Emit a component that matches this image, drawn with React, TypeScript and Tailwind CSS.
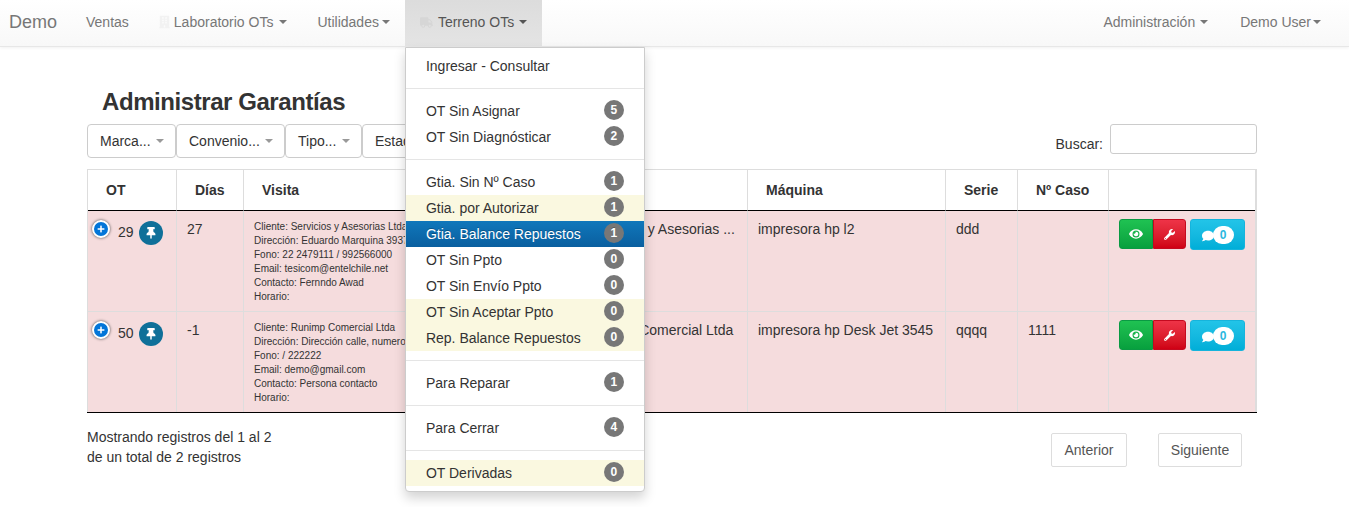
import { FaBuilding, FaComment, FaEye, FaPlus, FaThumbtack, FaTruck, FaWrench } from 'react-icons/fa';

const menuGroups = [
  [{ label: 'Ingresar - Consultar' }],
  [
    { label: 'OT Sin Asignar', count: 5 },
    { label: 'OT Sin Diagnósticar', count: 2 },
  ],
  [
    { label: 'Gtia. Sin Nº Caso', count: 1 },
    { label: 'Gtia. por Autorizar', count: 1, warn: true },
    { label: 'Gtia. Balance Repuestos', count: 1, active: true },
    { label: 'OT Sin Ppto', count: 0 },
    { label: 'OT Sin Envío Ppto', count: 0 },
    { label: 'OT Sin Aceptar Ppto', count: 0, warn: true },
    { label: 'Rep. Balance Repuestos', count: 0, warn: true },
  ],
  [{ label: 'Para Reparar', count: 1 }],
  [{ label: 'Para Cerrar', count: 4 }],
  [{ label: 'OT Derivadas', count: 0, warn: true }],
];

const rows = [
  {
    ot: 29,
    dias: '27',
    visita: [
      'Cliente: Servicios y Asesorias Ltda',
      'Dirección: Eduardo Marquina 3937',
      'Fono: 22 2479111 / 992566000',
      'Email: tesicom@entelchile.net',
      'Contacto: Fernndo Awad',
      'Horario:',
    ],
    cliente: 'Servicios y Asesorias ...',
    maquina: 'impresora hp l2',
    serie: 'ddd',
    caso: '',
  },
  {
    ot: 50,
    dias: '-1',
    visita: [
      'Cliente: Runimp Comercial Ltda',
      'Dirección: Dirección calle, numero',
      'Fono: / 222222',
      'Email: demo@gmail.com',
      'Contacto: Persona contacto',
      'Horario:',
    ],
    cliente: 'Runimp Comercial Ltda',
    maquina: 'impresora hp Desk Jet 3545',
    serie: 'qqqq',
    caso: '1111',
  },
];

function Caret({ className = 'ml-[5px]' }: { className?: string }) {
  return <span className={`inline-block h-0 w-0 border-x-4 border-t-4 border-x-transparent border-t-current align-middle ${className}`} />;
}

function FilterButton({ label, className }: { label: string; className: string }) {
  return (
    <button className={`flex h-[34px] items-center justify-between rounded border border-[#ccc] bg-white pl-3 pr-[11px] text-sm text-[#333] ${className}`}>
      {label}
      <Caret className="text-[#999]" />
    </button>
  );
}

function DropdownMenu() {
  return (
    <div className="absolute left-0 top-[47px] z-10 w-[240px] rounded-b border border-[#ccc] bg-white py-[5px] text-sm text-[#333] shadow-[0_6px_12px_rgba(0,0,0,0.175)]">
      {menuGroups.map((group, i) => (
        <div key={group[0].label}>
          {i > 0 ? <div className="my-[9px] h-px bg-[#e5e5e5]" /> : null}
          {group.map((item: { label: string; count?: number; warn?: boolean; active?: boolean }) => (
            <div
              key={item.label}
              className={`flex h-[26px] items-center justify-between pl-5 pr-5 ${
                item.active
                  ? 'bg-gradient-to-b from-[#1077bb] to-[#0a5f9f] text-white [text-shadow:0_-1px_0_rgba(0,0,0,0.25)]'
                  : item.warn
                    ? 'bg-[#faf8e0]'
                    : ''
              }`}
            >
              <span>{item.label}</span>
              {item.count !== undefined ? (
                <span className="-mt-[3px] flex h-5 w-5 items-center justify-center rounded-full bg-[#777] text-xs font-bold text-white">
                  {item.count}
                </span>
              ) : null}
            </div>
          ))}
        </div>
      ))}
    </div>
  );
}

function Navbar() {
  return (
    <nav className="flex h-[47px] items-stretch justify-between border-b border-[#e7e7e7] bg-gradient-to-b from-white to-[#f8f8f8] text-sm text-[#777] shadow-[0_1px_3px_rgba(0,0,0,0.06)]">
      <div className="flex items-stretch">
        <div className="flex w-[71px] items-center pb-0.5 pl-[9px] text-lg">Demo</div>
        <div className="flex items-center px-[15px] pb-0.5">Ventas</div>
        <div className="flex items-center px-[15px] pb-0.5">
          <FaBuilding className="mr-1 h-4 w-[11px] text-[#f2f2f2]" />
          Laboratorio OTs
          <Caret className="ml-1.5" />
        </div>
        <div className="flex items-center px-[15px] pb-0.5">
          Utilidades
          <Caret className="ml-[3px]" />
        </div>
        <div className="relative flex items-center bg-gradient-to-b from-[#dcdcdc] to-[#e4e4e4] px-[15px] pb-0.5 text-[#555]">
          <FaTruck className="mr-[5px] h-[13px] w-[13px] text-[#d6d6d6]" />
          Terreno OTs
          <Caret />
          <DropdownMenu />
        </div>
      </div>
      <div className="flex items-stretch pr-[13px]">
        <div className="flex items-center pb-0.5 pl-[15px] pr-[17px]">
          Administración
          <Caret />
        </div>
        <div className="flex items-center px-[15px] pb-0.5">
          Demo User
          <Caret className="ml-0.5" />
        </div>
      </div>
    </nav>
  );
}

function DataRow({ row }: { row: (typeof rows)[number] }) {
  const td = 'border-r border-b border-[#ddd] px-2.5 pt-2 align-top';
  return (
    <tr className="h-[101px] bg-[#f5dcdd] text-[#333]">
      <td className="border-r border-b border-[#ddd] align-top">
        <div className="flex items-start">
          <span className="ml-[4px] mt-[9px] flex h-[18px] w-[18px] shrink-0 items-center justify-center rounded-full border-2 border-white bg-[#0275d8] text-white shadow-[0_0_3px_#444]">
            <FaPlus className="h-2 w-2" />
          </span>
          <span className="ml-[8px] mt-[11px]">{row.ot}</span>
          <span className="ml-[5px] mt-[10px] flex h-6 w-6 items-center justify-center rounded-full bg-[#0f7099] text-white">
            <FaThumbtack className="h-3 w-3" />
          </span>
        </div>
      </td>
      <td className={td}>{row.dias}</td>
      <td className="border-r border-b border-[#ddd] px-2.5 pt-[9px] align-top text-[10px] leading-[14px]">
        {row.visita.map((line) => (
          <div key={line} className="whitespace-nowrap">
            {line}
          </div>
        ))}
      </td>
      <td className={td}>{row.cliente}</td>
      <td className={td}>{row.maquina}</td>
      <td className={td}>{row.serie}</td>
      <td className={td}>{row.caso}</td>
      <td className="border-b border-[#ddd] pl-2.5 pt-2 align-top">
        <div className="flex items-start">
          <button className="flex h-[30px] w-[34px] items-center justify-center rounded-l-[3px] border border-[#0a9a43] bg-gradient-to-b from-[#1fc252] to-[#07a03e] text-white">
            <FaEye className="h-3.5 w-3.5" />
          </button>
          <button className="flex h-[30px] w-[33px] items-center justify-center rounded-r-[3px] border border-[#c40a1f] bg-gradient-to-b from-[#ee3347] to-[#cf0014] text-white">
            <FaWrench className="h-[11px] w-[11px]" />
          </button>
          <button className="ml-1 flex h-[31px] w-[55px] items-center justify-center rounded-[3px] border border-[#16b4dc] bg-gradient-to-b from-[#22c4e8] to-[#00aed8] text-white">
            <FaComment className="-mr-px mt-0.5 h-3 w-3" />
            <span className="flex h-[18px] w-[21px] items-center justify-center rounded-full bg-white text-xs font-bold text-[#2bb8e0]">0</span>
          </button>
        </div>
      </td>
    </tr>
  );
}

export default function App() {
  const th = 'border-r border-[#ddd] px-2.5 text-left font-bold';
  return (
    <div className="h-[507px] overflow-hidden bg-white font-['Liberation_Sans',Arial,sans-serif] text-sm text-[#333]">
      <Navbar />
      <main className="pl-[87px] pr-[92px]">
        <h1 className="ml-[15px] mt-[41px] h-[36px] text-2xl font-semibold leading-[28px] tracking-[-0.43px]">Administrar Garantías</h1>
        <div className="flex items-start justify-between">
          <div className="flex">
            <FilterButton label="Marca..." className="w-[89px]" />
            <FilterButton label="Convenio..." className="w-[109px]" />
            <FilterButton label="Tipo..." className="w-[77px]" />
            <FilterButton label="Estado..." className="w-[100px]" />
          </div>
          <div className="flex items-center">
            <span className="mr-[7px] mt-[10px]">Buscar:</span>
            <input className="h-[30px] w-[147px] rounded-[3px] border border-[#ccc] bg-white" />
          </div>
        </div>
        <table className="mt-[11px] w-[1170px] table-fixed border-separate border-spacing-0 border-l border-r-2 border-t border-[#ddd] text-sm">
          <colgroup>
            <col className="w-[89px]" />
            <col className="w-[67px]" />
            <col className="w-[333px]" />
            <col className="w-[171px]" />
            <col className="w-[198px]" />
            <col className="w-[72px]" />
            <col className="w-[91px]" />
            <col />
          </colgroup>
          <thead>
            <tr className="h-[41px]">
              <th className={`${th} border-b border-b-black pl-[18px]`}>OT</th>
              <th className={`${th} border-b border-b-black pl-[18px]`}>Días</th>
              <th className={`${th} border-b border-b-black pl-[18px]`}>Visita</th>
              <th className={`${th} border-b border-b-black`}>Cliente</th>
              <th className={`${th} border-b border-b-black pl-[18px]`}>Máquina</th>
              <th className={`${th} border-b border-b-black pl-[18px]`}>Serie</th>
              <th className={`${th} border-b border-b-black pl-[18px]`}>Nº Caso</th>
              <th className="border-b border-b-black" />
            </tr>
          </thead>
          <tbody>
            {rows.map((row) => (
              <DataRow key={row.ot} row={row} />
            ))}
          </tbody>
        </table>
        <div className="relative -mt-px h-px w-[1170px] bg-black" />
        <div className="mt-[14px] flex items-start justify-between">
          <div className="leading-5">
            <div>Mostrando registros del 1 al 2</div>
            <div>de un total de 2 registros</div>
          </div>
          <div className="mr-[15px] mt-[6px] flex gap-[31px] text-[#555]">
            <button className="h-[34px] w-[76px] rounded-[2px] border border-[#ddd] bg-white">Anterior</button>
            <button className="h-[34px] w-[84px] rounded-[2px] border border-[#ddd] bg-white">Siguiente</button>
          </div>
        </div>
      </main>
    </div>
  );
}
